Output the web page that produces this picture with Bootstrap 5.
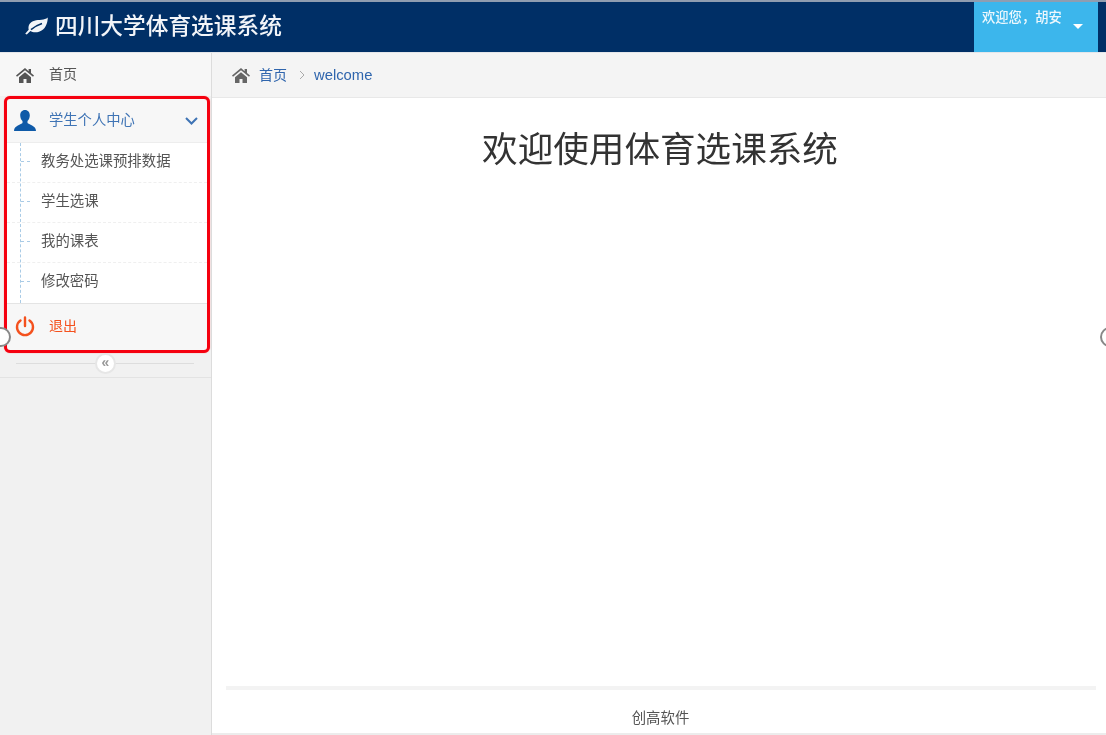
<!DOCTYPE html>
<html lang="zh"><head><meta charset="utf-8"><title>四川大学体育选课系统</title>
<link rel="stylesheet" href="https://cdn.jsdelivr.net/npm/bootstrap@5.3.0/dist/css/bootstrap.min.css">
<style>
html,body{height:735px;overflow:hidden}
body{font-family:"Liberation Sans","Noto Sans CJK SC",sans-serif;font-size:14px;color:#444;background:#fff}
.shot{height:735px;filter:blur(.5px);position:relative;overflow:hidden}
.topbar{height:53px;background:#002f66;border-top:2px solid #8f9db0;border-bottom:1px solid #e4e6ea}
.brand{font-size:22.7px;color:#f2f5f9;padding-left:25px;gap:7px;font-weight:500;margin-top:-2px}
.welcome-cell{width:124px;margin-right:8px;background:#3cb6ec;color:#eef8fd;font-size:13.3px;font-weight:500;padding:6px 0 0 8px}
.caret-mark{width:0;height:0;border:5px solid transparent;border-top-color:#fff;border-bottom:0;margin:16px 0 0 11px}
.bodywrap{height:682px}
.side{width:212px;background:#f1f1f1;border-right:1px solid #dcdcdc}
.side-home{height:43px;background:#f7f7f7;padding:0 0 0 16px;color:#555}
.side-icon{width:20px;flex:none;margin-right:13px}
.annot{margin-left:4px;margin-right:1px;border:3px solid #f5000f;border-radius:6px;height:257px;background:#f7f7f7;box-shadow:0 0 1px #f55}
.side-user{height:44px;padding:0 9px 0 7px;color:#3f74b5;border-bottom:1px solid #ededed;font-size:14.3px}
.side-user .side-icon{width:22px;margin-right:13px}
.sub-list{background:#fff;height:160px;position:relative}
.sub-item{height:40px;padding:0 0 2px 34px;color:#555;font-size:14.4px;border-bottom:1px dashed #efefef;position:relative}
.sub-item:last-child{border-bottom:0}
.sub-item::before{content:"";width:9px;border-top:1px dashed #a9cbe6;position:absolute;left:14px;top:18px}
.sub-rail{position:absolute;left:13px;top:0;bottom:0;border-left:1px dashed #a9cbe6}
.side-exit{height:45px;padding:0 0 0 8px;color:#f4511e;border-top:1px solid #e4e4e4}
.side-exit .side-icon{margin-right:14px}
.fold{height:25px;border-bottom:1px solid #e3e3e3;position:relative}
.fold-line{position:absolute;left:16px;right:17px;top:10px;border-top:1px solid #ddd}
.fold-btn{width:21px;height:21px;border-radius:50%;background:#fff;border:2px solid #e6e6e6;color:#999;font-size:14px;font-weight:700;line-height:15px;text-align:center;position:absolute;left:95px;top:0}
.crumb-bar{height:45px;background:#f4f4f4;border-bottom:1px solid #e8e8e8;padding-left:20px;color:#2f65ad}
.crumb-first{margin-left:1px}
.crumb-sep{color:#aaa;margin:0 9px 0 12px}
.crumb-last{font-size:14.8px}
.main-title{font-size:35.6px;font-weight:400;color:#333;margin:29px 0 0;padding-left:2px;text-align:center;line-height:46px}
.foot-line{height:4px;background:#f3f3f3;margin:0 10px 0 14px}
.foot-text{height:45px;font-size:14.4px;color:#555;padding:18px 0 0 3px;text-align:center;line-height:20px;border-bottom:2px solid #ececec}
.knob{position:absolute;width:20px;height:20px;border-radius:50%;background:#fff;border:2px solid #888;top:327px}
</style></head><body>
<div class="shot d-flex flex-column">
<header class="topbar d-flex justify-content-between">
 <div class="brand d-flex align-items-center">
  <svg width="23" height="18" viewBox="0 0 23 18"><path fill="#f2f5f9" d="M22.8.6c-.2 6-2.300 12.200-8.800 14.200-3.200 1-6.800.5-8.600-.7C4.200 15.100 3 16.300 1.800 17.600L.2 16.800C1.300 15.300 2.400 14.100 3.700 12.800 2.800 8.500 5 4.800 9.500 3.700 14 2.600 19.500 3.500 22.800.6z"/><path fill="none" stroke="#002f66" stroke-width="1.500" d="M6 12.600C9 10 12.500 8 17 6.500"/></svg>
  <span>四川大学体育选课系统</span>
 </div>
 <div class="welcome-cell d-flex"><span>欢迎您，胡安</span><span class="caret-mark"></span></div>
</header>
<div class="bodywrap d-flex">
 <aside class="side flex-shrink-0">
  <div class="side-home d-flex align-items-center"><span class="side-icon"><svg width="18" height="15" viewBox="0 0 18 15"><path fill="#555" d="M9 0 0 7.600l1 1.200L9 2.200l8 6.600 1-1.200-3-2.500V1h-2.400v2.200zM3 9.200V15h4.500v-4h3v4H15V9.200L9 4.200z"/></svg></span><span>首页</span></div>
  <div class="annot">
   <div class="side-user d-flex align-items-center"><span class="side-icon"><svg width="22" height="21" viewBox="0 0 22 21"><path fill="#0f5aa8" d="M11 0c3 0 4.800 2.300 4.800 5.300 0 2.500-1 4.600-2.300 5.700v2c1 1.600 8.500 2.300 8.500 8H0c0-5.700 7.500-6.400 8.500-8v-2C7.200 9.900 6.200 7.800 6.200 5.300 6.200 2.300 8 0 11 0z"/></svg></span><span class="flex-grow-1">学生个人中心</span><svg width="13" height="8" viewBox="0 0 13 8"><path fill="none" stroke="#3f74b5" stroke-width="2" d="M1 1l5.500 5.500L12 1"/></svg></div>
   <div class="sub-list"><div class="sub-rail"></div>
    <div class="sub-item d-flex align-items-center">教务处选课预排数据</div>
    <div class="sub-item d-flex align-items-center">学生选课</div>
    <div class="sub-item d-flex align-items-center">我的课表</div>
    <div class="sub-item d-flex align-items-center">修改密码</div>
   </div>
   <div class="side-exit d-flex align-items-center"><span class="side-icon"><svg width="20" height="21" viewBox="0 0 20 21"><path fill="none" stroke="#f4511e" stroke-width="2.400" stroke-linecap="round" d="M10 1.500V10M5.500 4.500a8 8 0 1 0 9 0"/></svg></span><span>退出</span></div>
  </div>
  <div class="fold"><div class="fold-line"></div><div class="fold-btn">«</div></div>
 </aside>
 <main class="flex-grow-1 d-flex flex-column">
  <div class="crumb-bar d-flex align-items-center">
   <svg class="me-2" width="18" height="15" viewBox="0 0 18 15"><path fill="#666" d="M9 0 0 7.600l1 1.200L9 2.200l8 6.600 1-1.200-3-2.500V1h-2.400v2.200zM3 9.200V15h4.500v-4h3v4H15V9.200L9 4.200z"/></svg>
   <span class="crumb-first">首页</span><svg class="crumb-sep" width="6" height="10" viewBox="0 0 6 10"><path fill="none" stroke="#aaa" d="M1 1l4 4-4 4"/></svg><span class="crumb-last">welcome</span>
  </div>
  <h1 class="main-title flex-grow-1">欢迎使用体育选课系统</h1>
  <div class="foot-line"></div>
  <div class="foot-text">创高软件</div>
 </main>
</div>
<span class="knob" style="left:-9px"></span><span class="knob" style="left:1100px"></span>
</div>
<script src="https://cdn.jsdelivr.net/npm/bootstrap@5.3.0/dist/js/bootstrap.bundle.min.js"></script>
</body></html>
